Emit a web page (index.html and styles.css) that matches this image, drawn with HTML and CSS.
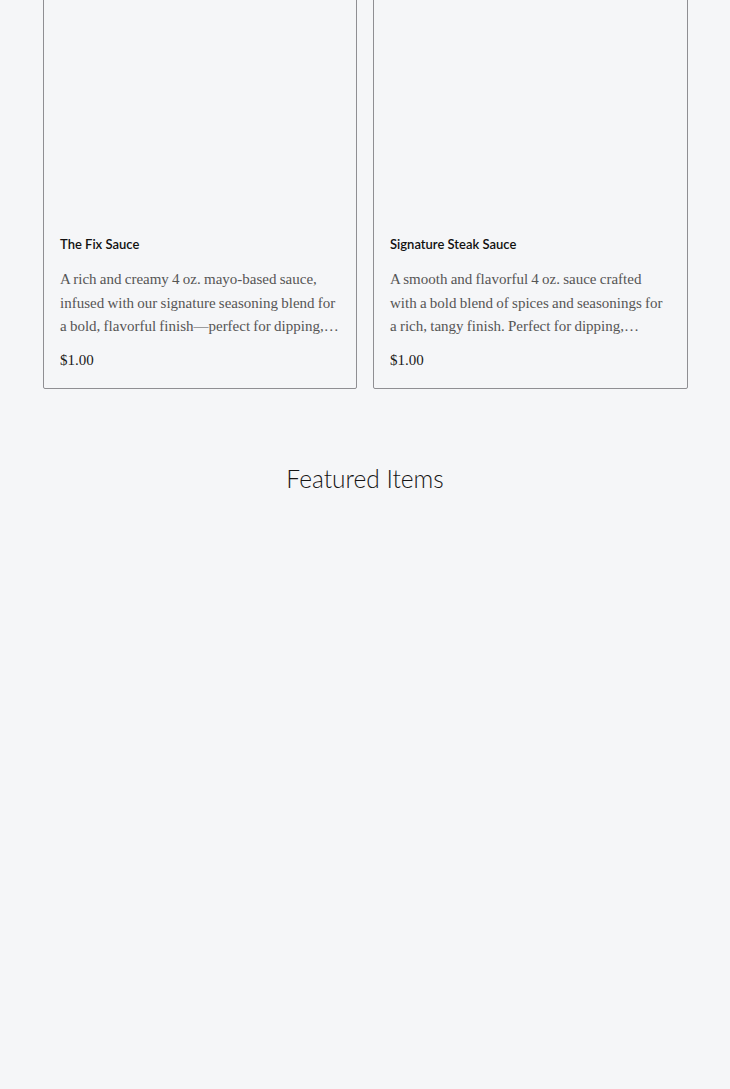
FILE: index.html
```html
<!DOCTYPE html>
<html lang="en">
<head>
    <meta charset="UTF-8">
    <meta name="viewport" content="width=device-width, initial-scale=1.0">
    <title>Sauces</title>
    <link rel="stylesheet" href="styles.css">
</head>
<body>
    <div class="page">
        <div class="product-grid">
            <div class="card">
                <div class="card-image"></div>
                <div class="card-body">
                    <h3 class="card-title">The Fix Sauce</h3>
                    <p class="card-desc">A rich and creamy 4 oz. mayo-based sauce, infused with our signature seasoning blend for a bold, flavorful finish—perfect for dipping,…</p>
                    <div class="card-price">$1.00</div>
                </div>
            </div>
            <div class="card">
                <div class="card-image"></div>
                <div class="card-body">
                    <h3 class="card-title">Signature Steak Sauce</h3>
                    <p class="card-desc">A smooth and flavorful 4 oz. sauce crafted with a bold blend of spices and seasonings for a rich, tangy finish. Perfect for dipping,…</p>
                    <div class="card-price">$1.00</div>
                </div>
            </div>
        </div>

        <h2 class="section-title">Featured Items</h2>
        <div class="featured"></div>
    </div>
</body>
</html>
```

FILE: styles.css
```css
body {
    margin: 0;
    background-color: #f5f6f8;
    color: #111;
    font-family: "Liberation Serif", serif;
}
.page {
    padding: 0 0 0 43px;
}
.product-grid {
    display: grid;
    grid-template-columns: 314px 315px;
    gap: 16px;
    margin-top: -78px;
}
.card {
    border: 1px solid #8f8f93;
    border-radius: 2px;
    background-color: #f5f6f8;
}
.card-image {
    height: 312px;
}
.card-body {
    padding: 0 16px 18px;
}
.card-title {
    margin: 0;
    font-family: Lato, sans-serif;
    font-size: 13px;
    font-weight: 600;
    line-height: 18px;
    color: #111;
}
.card-desc {
    margin: 15px 0 0;
    font-size: 15px;
    line-height: 23.5px;
    word-spacing: -0.5px;
    color: #555;
}
.card-price {
    margin-top: 11px;
    font-size: 15px;
    line-height: 20px;
    color: #1a1a1a;
}
.section-title {
    margin: 74px 43px 0 0;
    text-align: center;
    font-family: Lato, sans-serif;
    font-size: 24.5px;
    font-weight: 300;
    line-height: 32px;
    color: #151515;
}
.featured {
    height: 560px;
}
```
